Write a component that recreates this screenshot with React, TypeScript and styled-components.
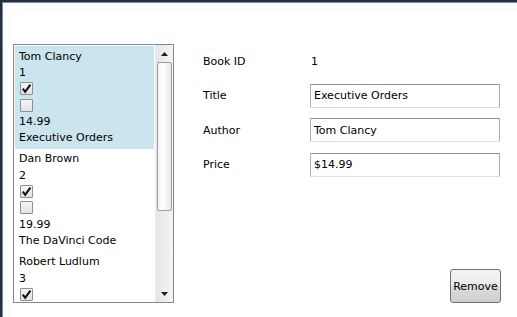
import React from "react";
import styled, { createGlobalStyle } from "styled-components";

type Book = {
    id: number;
    author: string;
    price: number;
    title: string;
    inStock: boolean;
    onSale: boolean;
};

const books: Book[] = [
    { id: 1, author: "Tom Clancy", price: 14.99, title: "Executive Orders", inStock: true, onSale: false },
    { id: 2, author: "Dan Brown", price: 19.99, title: "The DaVinci Code", inStock: true, onSale: false },
    { id: 3, author: "Robert Ludlum", price: 9.99, title: "The Bourne Identity", inStock: true, onSale: false },
];

const GlobalStyle = createGlobalStyle`
    html, body {
        margin: 0;
        padding: 0;
        background: #ffffff;
    }
    body {
        font-family: "DejaVu Sans", Verdana, sans-serif;
        font-size: 11px;
        color: #000000;
    }
`;

const Check = ({ checked }: { checked: boolean }) => (
    <CheckBox>
        {checked && (
            <svg width="11" height="11" viewBox="0 0 11 11">
                <path d="M1.8 5.6 L4.2 8.8 L9.4 1.6" fill="none" stroke="#111111" strokeWidth="2.1" />
            </svg>
        )}
    </CheckBox>
);

const Arrow = ({ up }: { up: boolean }) => (
    <svg width="7" height="4" viewBox="0 0 7 4">
        <path d={up ? "M0 4 L3.5 0 L7 4 Z" : "M0 0 L3.5 4 L7 0 Z"} fill="#1e1e1e" />
    </svg>
);

export default function App() {
    const selected = books[0];
    return (
        <>
            <GlobalStyle />
            <Frame>
                <Inner>
                    <ListBox>
                        <Items>
                            {books.map((b) => (
                                <Item key={b.id} selected={b.id === selected.id}>
                                    <Line>{b.author}</Line>
                                    <Line>{b.id}</Line>
                                    <Line><Check checked={b.inStock} /></Line>
                                    <Line><Check checked={b.onSale} /></Line>
                                    <Line>{b.price.toFixed(2)}</Line>
                                    <Line>{b.title}</Line>
                                </Item>
                            ))}
                        </Items>
                        <ScrollBar>
                            <ScrollButton><Arrow up /></ScrollButton>
                            <Track>
                                <Thumb />
                            </Track>
                            <ScrollButton><Arrow up={false} /></ScrollButton>
                        </ScrollBar>
                    </ListBox>
                    <Details>
                        <Form>
                            <Label>Book ID</Label>
                            <Value>{selected.id}</Value>
                            <Label>Title</Label>
                            <Input defaultValue={selected.title} />
                            <Label>Author</Label>
                            <Input defaultValue={selected.author} />
                            <Label>Price</Label>
                            <Input defaultValue={`$${selected.price.toFixed(2)}`} />
                        </Form>
                        <ButtonRow>
                            <Button>Remove</Button>
                        </ButtonRow>
                    </Details>
                </Inner>
            </Frame>
        </>
    );
}

const Frame = styled.div`
    height: 317px;
    box-sizing: border-box;
    border-top: 2px solid #2e2e30;
    border-left: 2px solid #2e2e30;
`;

const Inner = styled.div`
    height: 100%;
    box-sizing: border-box;
    border-top: 1px solid #5b8fe6;
    border-left: 1px solid #5b8fe6;
    display: grid;
    grid-template-columns: 161px 1fr;
    column-gap: 28px;
    padding: 41px 16px 14px 10px;
`;

const ListBox = styled.div`
    display: flex;
    height: 259px;
    box-sizing: border-box;
    border: 1px solid #828790;
    background: #ffffff;
    overflow: hidden;
`;

const Items = styled.div`
    flex: 1;
    min-height: 0;
    padding: 1px;
    overflow: hidden;
`;

const Item = styled.div<{ selected: boolean }>`
    padding: 2px 4px 3px 4px;
    background: ${(p) => (p.selected ? "#cbe5ee" : "transparent")};
`;

const Line = styled.div`
    height: 16.3px;
    display: flex;
    align-items: center;
    white-space: nowrap;
`;

const CheckBox = styled.div`
    width: 13px;
    height: 13px;
    box-sizing: border-box;
    border: 1px solid #8e8f8f;
    border-radius: 1px;
    background: linear-gradient(#f4f4f4, #e0e3e6);
    display: flex;
    align-items: center;
    justify-content: center;
    margin-left: 1px;
`;

const ScrollBar = styled.div`
    width: 17px;
    display: flex;
    flex-direction: column;
    background: linear-gradient(90deg, #e3e5e8, #f4f5f6);
    border-left: 1px solid #eceef0;
`;

const ScrollButton = styled.div`
    height: 17px;
    display: flex;
    align-items: center;
    justify-content: center;
`;

const Track = styled.div`
    flex: 1;
    padding: 0 1px;
`;

const Thumb = styled.div`
    height: 149px;
    box-sizing: border-box;
    border: 1px solid #9a9da2;
    border-radius: 2px;
    background: linear-gradient(90deg, #f3f3f3, #ffffff 40%, #e6e7e9);
`;

const Details = styled.div`
    display: flex;
    flex-direction: column;
    justify-content: space-between;
`;

const Form = styled.div`
    display: grid;
    grid-template-columns: 108px 190px;
    grid-auto-rows: 24px;
    row-gap: 10.5px;
    align-items: center;
    margin-top: 5px;
`;

const Label = styled.div`
    padding-left: 1px;
`;

const Value = styled.div`
    padding-left: 1px;
`;

const Input = styled.input`
    box-sizing: border-box;
    width: 190px;
    height: 24px;
    border: 1px solid #abadb3;
    border-top-color: #8c8f94;
    border-bottom-color: #dde0e3;
    border-radius: 1px;
    padding: 0 3px;
    font: inherit;
    color: #000000;
    outline: none;
`;

const ButtonRow = styled.div`
    display: flex;
    justify-content: flex-end;
`;

const Button = styled.button`
    width: 51px;
    height: 34px;
    box-sizing: border-box;
    border: 1px solid #707070;
    border-radius: 3px;
    background: linear-gradient(#f3f3f3 0%, #ebebeb 50%, #dddddd 50%, #cfcfcf 100%);
    font: inherit;
    color: #000000;
    padding: 0;
`;
